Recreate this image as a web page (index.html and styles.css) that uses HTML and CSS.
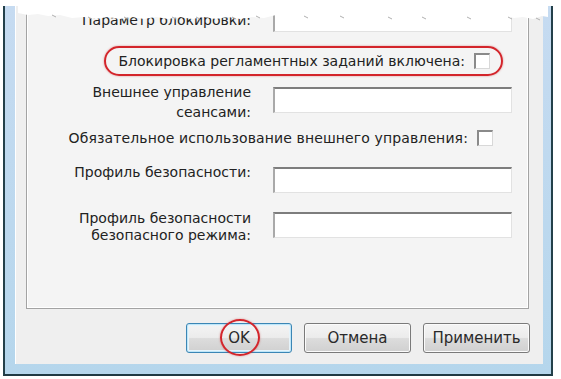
FILE: index.html
```html
<!DOCTYPE html>
<html>
<head>
    <meta charset="UTF-8">
    <title>Свойства</title>
    <link rel="stylesheet" href="styles.css">
</head>
<body>
    <div class="window">
        <div class="client">
            <div class="panel">
                <div class="field row-1">
                    <div class="label">Параметр блокировки:</div>
                    <div class="input"></div>
                </div>
                <div class="check-row row-2">
                    <div class="marked">
                        <span>Блокировка регламентных заданий включена:</span>
                        <span class="checkbox"></span>
                    </div>
                </div>
                <div class="field row-3">
                    <div class="label">Внешнее управление<br>сеансами:</div>
                    <div class="input"></div>
                </div>
                <div class="check-row row-4">
                    <span class="wide">Обязательное использование внешнего управления:</span>
                    <span class="checkbox"></span>
                </div>
                <div class="field row-5">
                    <div class="label">Профиль безопасности:</div>
                    <div class="input"></div>
                </div>
                <div class="field row-6">
                    <div class="label">Профиль безопасности<br>безопасного режима:</div>
                    <div class="input"></div>
                </div>
            </div>
            <div class="buttons">
                <button class="btn default">OK<span class="ring"></span></button>
                <button class="btn">Отмена</button>
                <button class="btn">Применить</button>
            </div>
        </div>
        <svg class="tear" width="530" height="18" viewBox="0 0 530 18">
            <path d="M0 0 H530 V11 L524 10 L515 13 L505 11 L496 12 L486 10 L476 12 L466 10 L455 12 L445 10 L434 12 L423 10 L412 12 L400 10 L390 12 L378 10 L366 12 L354 10 L342 11 L330 9 L318 11 L306 9 L294 11 L282 9 L270 11 L258 9 L246 12 L234 11 L222 13 L210 11 L198 13 L186 11 L174 13 L162 11 L150 13 L138 11 L126 13 L114 11 L102 13 L90 11 L78 13 L66 11 L54 12 L42 9 L30 10 L20 8 L10 9 L0 7 Z" fill="#ffffff"/>
            <path d="M34 9 L38 11 M70 11 L74 13 M106 11 L110 13 M154 11 L158 13 M178 11 L182 13 M214 11 L218 13 M238 10 L242 12 M286 10 L290 12 M322 10 L326 12 M370 11 L374 13 M404 11 L408 13 M449 11 L453 13 M490 11 L494 13 M518 12 L522 14" stroke="#b0b0b0" stroke-width="1" fill="none"/>
        </svg>
    </div>
</body>
</html>
```

FILE: styles.css
```css
body{
    margin: 0;
    background-color: #ffffff;
    font-family: "DejaVu Sans", sans-serif;
    font-size: 14px;
    color: #222222;
}

.window{
    position: relative;
    box-sizing: border-box;
    width: 550px;
    height: 370px;
    margin-left: 3px;
    padding: 0 8px 10px 10px;
    border-left: 2px solid #23404a;
    border-right: 2px solid #23404a;
    border-bottom: 2px solid #1f3a44;
    background: linear-gradient(to bottom, #c6dbf1, #b5d6ec);
}

.client{
    box-sizing: border-box;
    height: 358px;
    padding: 0 13px 0 10px;
    background-color: #efefef;
    border-left: 1px solid #ffffff;
}

.panel{
    box-sizing: border-box;
    height: 303px;
    margin-right: 1px;
    border: 1px solid #a3a3a3;
    border-top: none;
    background-color: #f4f4f4;
    box-shadow: inset 1px 0 0 #ffffff, inset -1px -1px 0 #ffffff;
}

.field{
    display: grid;
    grid-template-columns: 224px 239px;
    column-gap: 22px;
    height: 26px;
    align-items: start;
}

.label{
    text-align: right;
    line-height: 19px;
}

.input{
    box-sizing: border-box;
    height: 26px;
    background-color: #ffffff;
    border-top: 2px solid #7d7d7d;
    border-left: 2px solid #a9a9a9;
    border-right: 1px solid #e2e2e2;
    border-bottom: 1px solid #e2e2e2;
}

.check-row{
    display: flex;
    justify-content: flex-end;
    align-items: center;
}

.checkbox{
    box-sizing: border-box;
    width: 16px;
    height: 16px;
    margin-left: 9px;
    background-color: #ffffff;
    border-top: 2px solid #8a8a8a;
    border-left: 2px solid #8a8a8a;
    border-right: 1px solid #d8d8d8;
    border-bottom: 1px solid #d8d8d8;
}

.marked{
    box-sizing: border-box;
    display: flex;
    align-items: center;
    height: 30px;
    padding: 0 11px 0 12px;
    border: 2px solid #d3252b;
    border-radius: 15px;
    box-shadow: 0 0 2px rgba(200, 30, 30, 0.5);
}

.wide{
    letter-spacing: 0.12px;
}

.row-1{
    margin-top: 6px;
}

.row-1 .label{
    margin-top: 5px;
}

.row-2{
    margin-top: 14px;
    padding-right: 25px;
}

.row-3{
    margin-top: 11px;
}

.row-3 .label{
    margin-top: -5px;
    line-height: 20px;
}

.row-4{
    height: 16px;
    margin-top: 17px;
    padding-right: 35px;
}

.row-5{
    margin-top: 21px;
}

.row-5 .label{
    margin-top: -4px;
}

.row-6{
    margin-top: 19px;
}

.row-6 .label{
    margin-top: -2px;
    line-height: 17px;
}

.buttons{
    display: flex;
    justify-content: flex-end;
    gap: 12px;
    margin-top: 14px;
}

.btn{
    position: relative;
    width: 107px;
    height: 30px;
    font-family: "DejaVu Sans", sans-serif;
    font-size: 15px;
    color: #2a2a2a;
    border: 1px solid #7a7a7a;
    border-radius: 3px;
    background: linear-gradient(to bottom, #f4f4f4 0%, #ececec 48%, #dcdcdc 52%, #d0d0d0 100%);
    box-shadow: inset 0 0 0 1px #fbfbfb;
}

.default{
    width: 106px;
    border-color: #3b86b5;
    box-shadow: inset 0 0 0 1px #bfe6f8, inset 0 0 0 2px #e6f4fb;
}

.ring{
    position: absolute;
    left: 33px;
    top: -5px;
    width: 36px;
    height: 33px;
    border: 2px solid #d3252b;
    border-radius: 50%;
    box-shadow: 0 0 2px rgba(200, 30, 30, 0.5);
}

.tear{
    position: absolute;
    left: 13px;
    top: 0;
}
```
